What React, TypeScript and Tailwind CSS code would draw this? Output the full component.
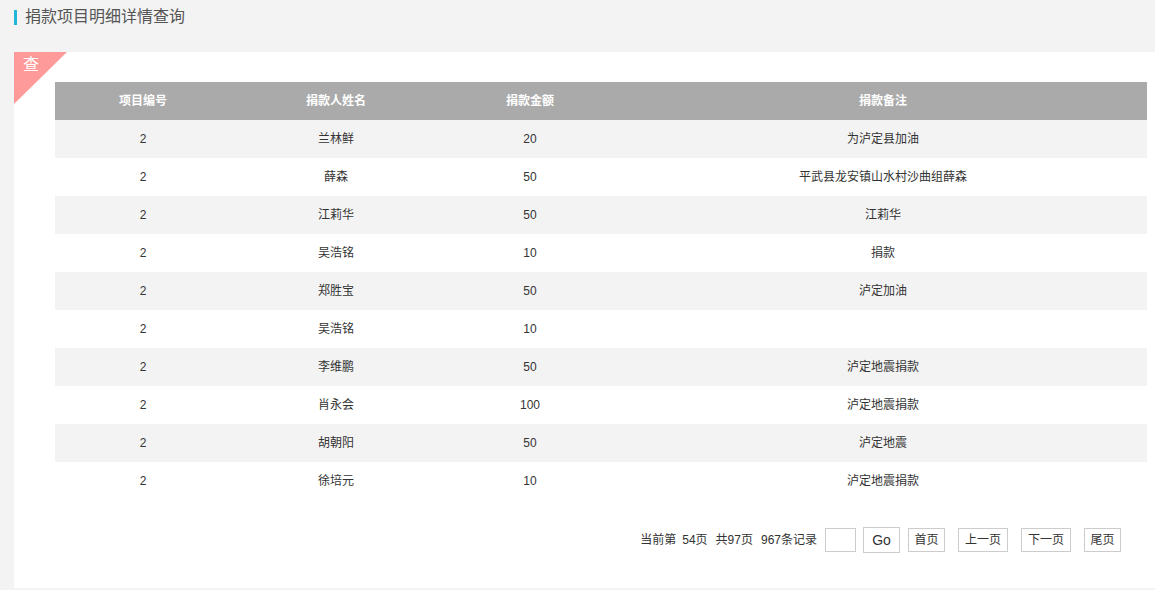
const rows = [
  { id: "2", name: "兰林鲜", amount: "20", note: "为泸定县加油" },
  { id: "2", name: "薛森", amount: "50", note: "平武县龙安镇山水村沙曲组薛森" },
  { id: "2", name: "江莉华", amount: "50", note: "江莉华" },
  { id: "2", name: "吴浩铭", amount: "10", note: "捐款" },
  { id: "2", name: "郑胜宝", amount: "50", note: "泸定加油" },
  { id: "2", name: "吴浩铭", amount: "10", note: "" },
  { id: "2", name: "李维鹏", amount: "50", note: "泸定地震捐款" },
  { id: "2", name: "肖永会", amount: "100", note: "泸定地震捐款" },
  { id: "2", name: "胡朝阳", amount: "50", note: "泸定地震" },
  { id: "2", name: "徐培元", amount: "10", note: "泸定地震捐款" },
];

const font = "font-['Liberation_Sans','Noto_Sans_CJK_SC',sans-serif]";

export default function App() {
  return (
    <div className={`w-[1155px] h-[590px] bg-[#f3f3f3] overflow-hidden ${font}`}>
      {/* title */}
      <div className="flex items-center h-[34px] pl-[14px]">
        <span className="w-[3px] h-[15px] bg-[#1fb6d8]" />
        <span className="ml-[8px] text-[16px] text-[#555] leading-none">捐款项目明细详情查询</span>
      </div>

      <div className="mt-[18px] ml-[14px] h-[536px] bg-white relative">
        {/* corner badge */}
        <div className="absolute left-0 top-0 w-[53px] h-[52px] bg-[#ff9a9a] [clip-path:polygon(0_0,100%_0,0_100%)]" />
        <span className="absolute left-[9px] top-[5px] text-[16px] text-white leading-none">查</span>

        <div className="pt-[30px] pl-[41px] pr-[8px]">
          <table className="w-full border-collapse table-fixed text-[12px]">
            <colgroup>
              <col className="w-[176px]" />
              <col className="w-[210px]" />
              <col className="w-[178px]" />
              <col />
            </colgroup>
            <thead>
              <tr className="h-[38px] bg-[#aaaaaa] text-white font-bold">
                <th className="font-bold">项目编号</th>
                <th className="font-bold">捐款人姓名</th>
                <th className="font-bold">捐款金额</th>
                <th className="font-bold">捐款备注</th>
              </tr>
            </thead>
            <tbody className="text-[#333]">
              {rows.map((r, i) => (
                <tr key={i} className={`h-[38px] text-center ${i % 2 === 0 ? "bg-[#f3f3f3]" : "bg-white"}`}>
                  <td>{r.id}</td>
                  <td>{r.name}</td>
                  <td>{r.amount}</td>
                  <td>{r.note}</td>
                </tr>
              ))}
            </tbody>
          </table>

          {/* pagination */}
          <div className="flex justify-end items-center mt-[27px] pr-[26px] text-[12px] text-[#333]">
            <span>当前第</span>
            <span className="ml-[6px]">54页</span>
            <span className="ml-[8px]">共97页</span>
            <span className="ml-[8px]">967条记录</span>
            <span className="ml-[8px] w-[31px] h-[24px] border border-[#ccc]" />
            <button className="ml-[7px] w-[37px] h-[26px] border border-[#ccc] text-[14px] bg-white">Go</button>
            <button className="ml-[8px] w-[37px] h-[24px] border border-[#ccc] bg-white">首页</button>
            <button className="ml-[13px] w-[50px] h-[24px] border border-[#ccc] bg-white">上一页</button>
            <button className="ml-[13px] w-[50px] h-[24px] border border-[#ccc] bg-white">下一页</button>
            <button className="ml-[13px] w-[37px] h-[24px] border border-[#ccc] bg-white">尾页</button>
          </div>
        </div>
      </div>
    </div>
  );
}
